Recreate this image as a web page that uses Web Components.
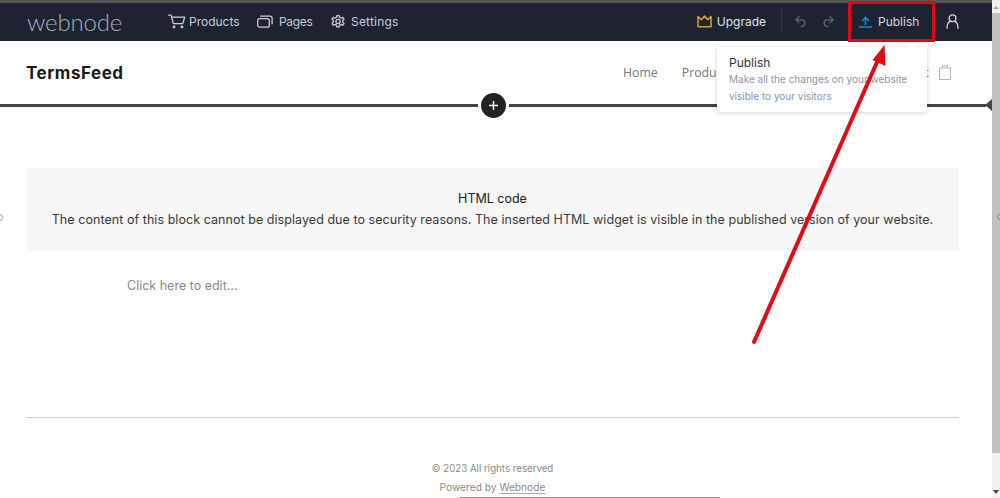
<!DOCTYPE html>
<html lang="en"><head><meta charset="utf-8"><title>Webnode editor</title>
<style>
html,body{margin:0;height:100%;overflow:hidden;background:#fff}
body{font-family:Inter,"Liberation Sans",sans-serif}
</style></head><body>
<app-frame>
  <top-bar></top-bar>
  <site-header></site-header>
  <section-divider></section-divider>
  <html-block></html-block>
  <edit-text>Click here to edit...</edit-text>
  <site-footer></site-footer>
</app-frame>
<script>
const el=(name,html)=>customElements.define(name,class extends HTMLElement{constructor(){super();this.attachShadow({mode:'open'}).innerHTML=html}});
const ico='fill="none" stroke="currentColor" stroke-width="1.3" stroke-linecap="round" stroke-linejoin="round"';
el('app-frame',`<style>
:host{display:flex;width:1000px;height:498px;position:relative;overflow:hidden;background:#fff}
.main{width:992px;display:flex;flex-direction:column}
.edge{position:absolute;left:-4px;top:214px;width:7px;height:7px;border-radius:50%;border:1px solid #999;box-sizing:border-box}
</style><div class="main"><slot></slot></div><scroll-bar></scroll-bar><span class="edge"></span><publish-tip></publish-tip><red-arrow></red-arrow>`);
el('scroll-bar',`<style>
:host{display:flex;flex-direction:column;width:8px;height:498px;background:#f1f1f1;align-items:center;box-sizing:border-box;position:relative}
.thumb{width:8px;height:440px;background:#c1c1c1;margin-top:13px}
.dn{margin-top:auto;margin-bottom:4px;width:0;height:0;border:3px solid transparent;border-top:4px solid #444;border-bottom:0}
.up{position:absolute;top:6px;left:1px;width:0;height:0;border:3px solid transparent;border-bottom:3px solid #a8a8a8;border-top:0}
.dot{position:absolute;left:5px;top:213px;width:7px;height:7px;border-radius:50%;border:1px solid #8d8d8d;box-sizing:border-box}
</style><span class="up"></span><div class="thumb"></div><span class="dn"></span><span class="dot"></span>`);
el('top-bar',`<style>
:host{display:flex;align-items:center;height:41px;box-sizing:border-box;background:#1d2331;border-top:3px solid #565656;color:#c8cdd5;font:400 12px Inter,"Liberation Sans",sans-serif;padding-bottom:1px}
.logo{font:300 24px/1 Lato,"Open Sans",sans-serif;color:#a8aebb;margin-left:27px;width:141px;letter-spacing:-.15px}
.it{display:flex;align-items:center}
svg{display:block}
.sep{width:1px;height:27px;background:#2e3443;margin:0 13px 0 15px}
.up{color:#dfe2e7}
</style>
<span class="logo">webnode</span>
<span class="it" style="gap:3px;width:89px"><svg width="18" height="15" viewBox="0 0 18 15" ${ico}><path d="M.7 1.2h2.4l2.2 8.4h9.4l2-6.4H3.7"/><circle cx="6" cy="13" r=".8"/><circle cx="14" cy="13" r=".8"/></svg>Products</span>
<span class="it" style="gap:6px;width:74px"><svg width="16" height="13" viewBox="0 0 16 13" ${ico}><rect x=".7" y="3.6" width="11.6" height="8.6" rx="2"/><path d="M3.6 1.2h9.5a2 2 0 0 1 2 2v5.6"/></svg><span style="letter-spacing:-.3px">Pages</span></span>
<span class="it" style="gap:6px"><svg width="14" height="14" viewBox="0 0 14 14" ${ico}><path d="M5.8.7h2.4l.4 1.8 1.5.7 1.6-.9 1.3 1.9-1.3 1.3v1.6l1.3 1.3-1.3 1.9-1.6-.9-1.5.7-.4 1.8H5.8l-.4-1.8-1.5-.7-1.6.9L1 8.4l1.3-1.3V5.500L1 4.200l1.300-1.900 1.600.9 1.500-.7z"/><circle cx="7" cy="6.500" r="2.100"/></svg><span style="letter-spacing:.2px">Settings</span></span>
<span style="flex:1"></span>
<span class="it up" style="gap:5px"><svg width="15" height="13" viewBox="0 0 15 13" fill="none" stroke="#d9a12c" stroke-width="1.500" stroke-linejoin="round"><path d="M1 1.500l3.400 3.200L7.500 1l3.100 3.700L14 1.500v10.300H1z"/></svg>Upgrade</span>
<span class="sep"></span>
<span class="it" style="gap:15px;color:#5d6472;width:39px"><svg width="12" height="11" viewBox="0 0 12 11" ${ico}><path d="M4 .8L.8 3.800 4 6.800M1 3.800h6.500a3.400 3.400 0 0 1 0 6.500H6"/></svg><svg width="12" height="11" viewBox="0 0 12 11" ${ico}><path d="M8 .8l3.200 3-3.200 3M11 3.800H4.500a3.400 3.400 0 0 0 0 6.500H6"/></svg></span>
<publish-button></publish-button>
<span class="it" style="color:#d5d9df;margin:0 33px 0 11px"><svg width="13" height="15" viewBox="0 0 13 15" ${ico}><circle cx="6.500" cy="4.300" r="3.400"/><path d="M1 14.300c0-4 1.500-6.500 3.300-7M12 14.300c0-4-1.500-6.500-3.300-7"/></svg></span>`);
el('publish-button',`<style>
:host{display:flex;align-items:center;gap:6px;box-sizing:border-box;width:87px;height:41px;margin:-3px 0 -3px 14px;padding-left:8px;border:3px solid #e30613;color:#d3d8df;font:400 12px Inter,"Liberation Sans",sans-serif}
svg{display:block}
</style><svg width="13" height="12" viewBox="0 0 13 12" fill="none" stroke="#1c87d0" stroke-width="1.600"><path d="M0 11h13M6.500 9V1.500M3 5l3.500-3.500L10 5"/></svg>Publish`);
el('site-header',`<style>
:host{display:flex;align-items:center;height:51px;padding:12px 41px 0 26px;box-sizing:border-box;color:#777;font:400 12.300px "Open Sans",sans-serif}
b{font:700 17px Inter,sans-serif;color:#1a1a1a;flex:1;letter-spacing:.55px}
nav{display:flex;width:306px}
span.c{margin-left:auto}
span.p{margin-left:24px}
svg{margin-left:10px;display:block}
</style><b>TermsFeed</b><nav><span>Home</span><span class="p">Products</span><span class="c">Contact</span></nav><svg width="12" height="15" viewBox="0 0 12 15" fill="none" stroke="#b5b5b5" stroke-width="1"><rect x=".5" y="3" width="11" height="11.500"/><path d="M3.500 3V.8h5V3"/></svg>`);
el('section-divider',`<style>
:host{display:flex;align-items:center;height:26px}
i{height:3px;background:#434343;display:block}
.plus{width:25px;height:25px;border-radius:50%;background:#222;color:#fff;display:flex;align-items:center;justify-content:center;margin:0 3px;flex:none}
.tri{width:0;height:0;border:6px solid transparent;border-right:7px solid #434343;border-left:0;margin-left:-1px}
</style><i style="width:478px"></i><span class="plus"><svg width="9" height="9" viewBox="0 0 9 9" stroke="#fff" stroke-width="1.400"><path d="M4.500 0v9M0 4.500h9"/></svg></span><i style="flex:1"></i><span class="tri"></span>`);
el('html-block',`<style>
:host{display:flex;flex-direction:column;align-items:center;height:83px;box-sizing:border-box;margin:50px 33px 0 26px;padding-top:21px;background:#f7f7f7;color:#3a3a3a;font:400 12.500px/20px Inter,sans-serif;white-space:nowrap}
</style><div style="color:#222">HTML code</div><div style="letter-spacing:.055px;margin-top:1px">The content of this block cannot be displayed due to security reasons. The inserted HTML widget is visible in the published version of your website.</div>`);
el('edit-text',`<style>
:host{display:block;margin:26px 0 0 127px;color:#8a8a8a;font:400 12.500px/18px Inter,sans-serif}
</style><slot></slot>`);
el('site-footer',`<style>
:host{display:block;flex:1;margin:122px 33px 0 26px;border-top:1px solid #cfcfcf;position:relative;text-align:center;color:#8a8a8a;font:400 10px/19px Inter,sans-serif;padding-top:41px}
u{text-decoration-color:#aaa;text-underline-offset:2px}
.bar{position:absolute;left:434px;top:79px;width:260px;height:1px;background:#888}
</style><div style="font-size:9.700px">© 2023 All rights reserved</div><div style="font-size:10.200px">Powered by <u>Webnode</u></div><span class="bar"></span>`);
el('publish-tip',`<style>
:host{position:absolute;left:717px;top:47px;width:210px;height:65px;box-sizing:border-box;padding:8px 12px;background:#fff;border-radius:3px;box-shadow:0 1px 5px rgba(0,0,0,.18);color:#8b95a7;font:400 10px/17px Inter,sans-serif;white-space:nowrap}
:host::before{content:"";position:absolute;right:9px;top:-5px;border:6px solid transparent;border-bottom:5px solid #fff;border-top:0}
h4{margin:0;font:400 12px/16px Inter,sans-serif;color:#333}
</style><h4>Publish</h4><div>Make all the changes on your website<br>visible to your visitors</div>`);
el('red-arrow',`<style>
:host{position:absolute;left:0;top:0;width:1000px;height:498px;pointer-events:none}
svg{display:block}
</style><svg width="1000" height="498" viewBox="0 0 1000 498"><path d="M754 342L877 62" stroke="#e30b13" stroke-width="4" stroke-linecap="round"/><path d="M884.500 45L872.500 60L885.500 66z" fill="#e30b13"/></svg>`);
</script>
</body></html>
